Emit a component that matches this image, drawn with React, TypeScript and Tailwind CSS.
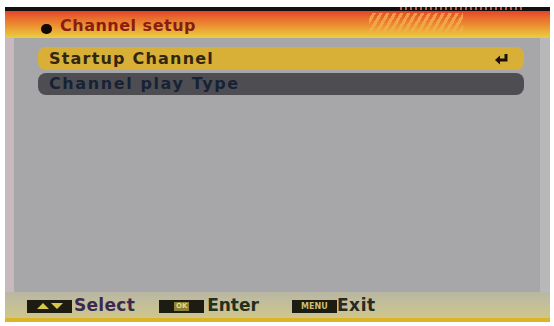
const font = "font-['DejaVu_Sans','Liberation_Sans',sans-serif]";

const EnterIcon = () => (
  <svg width="16" height="12" viewBox="0 0 16 12">
    <path d="M12 1 L12 7 L5 7" fill="none" stroke="#1a1208" strokeWidth="3" />
    <path d="M1 7 L6 2.5 L6 11.5 Z" fill="#1a1208" />
  </svg>
);

const KeyBox = ({ children }: { children: React.ReactNode }) => (
  <div className="flex h-[13px] w-[45px] items-center justify-center bg-[#1c1c12]">{children}</div>
);

export default function App() {
  return (
    <div className={`h-[326px] w-[554px] overflow-hidden bg-white ${font}`}>
      <div className="ml-[5px] mt-[7px] flex h-[315px] w-[545px] flex-col">
        {/* title bar */}
        <div className="relative h-[31px] border-t-[4px] border-[#141010] bg-gradient-to-b from-[#e4432a] via-[#ec8a30] to-[#e6d040]">
          <div className="absolute left-[392px] top-[-4px] h-[3px] w-[128px] bg-[repeating-linear-gradient(90deg,#1a1010_0px,#1a1010_3px,#c06040_3px,#c06040_5px)]" />
          <div className="absolute left-[364px] top-[2px] h-[20px] w-[94px] bg-[repeating-linear-gradient(120deg,transparent_0px,transparent_3px,#f2b04a_3px,#f2b04a_6px)] opacity-80" />
          <div className="flex h-full items-center pl-[36px] pt-[3px]">
            <div className="mt-[5px] h-[10px] w-[11px] rounded-full bg-[#120808]" />
            <span className="ml-[8px] text-[16px] font-bold tracking-[0.5px] text-[#8a1c12]">Channel setup</span>
          </div>
        </div>
        {/* body */}
        <div className="flex flex-1 bg-[#a7a7a9]">
          <div className="w-[9px] bg-[#c7b9bd]" />
          <div className="flex flex-1 flex-col gap-[3px] pl-[24px] pr-[16px] pt-[9px]">
            <div className="flex h-[23px] items-center justify-between rounded-[8px] bg-[#d8b038] pl-[11px] pr-[14px]">
              <span className="text-[16px] font-bold tracking-[1.2px] text-[#33260e]">Startup Channel</span>
              <EnterIcon />
            </div>
            <div className="flex h-[22px] items-center rounded-[8px] bg-[#4e4e52] pl-[11px]">
              <span className="text-[16px] font-bold tracking-[1.6px] text-[#172236]">Channel play Type</span>
            </div>
          </div>
          <div className="w-[10px] bg-[#b8b8ba]" />
        </div>
        {/* footer */}
        <div className="flex h-[30px] items-center border-b-[4px] border-[#dcb428] bg-gradient-to-b from-[#b9b7a4] to-[#cfc68a] pl-[22px] pt-[2px]">
          <div className="flex items-center gap-[2px]">
            <KeyBox>
              <svg width="30" height="8" viewBox="0 0 30 8">
                <path d="M2 7 L8 1 L14 7 Z M16 1 L28 1 L22 7 Z" fill="#d8c848" />
              </svg>
            </KeyBox>
            <span className="text-[17px] font-bold tracking-[0.3px] text-[#3a2a52]">Select</span>
          </div>
          <div className="ml-[24px] flex items-center gap-[3px]">
            <KeyBox>
              <span className="bg-[#8a8038] px-[2px] text-[7px] font-bold leading-[9px] text-[#e8d870]">OK</span>
            </KeyBox>
            <span className="text-[17px] font-bold text-[#22301e]">Enter</span>
          </div>
          <div className="ml-[33px] flex items-center">
            <KeyBox>
              <span className="text-[8px] font-bold leading-[9px] text-[#c8c070]">MENU</span>
            </KeyBox>
            <span className="text-[17px] font-bold tracking-[0.6px] text-[#2a2a22]">Exit</span>
          </div>
        </div>
      </div>
    </div>
  );
}
